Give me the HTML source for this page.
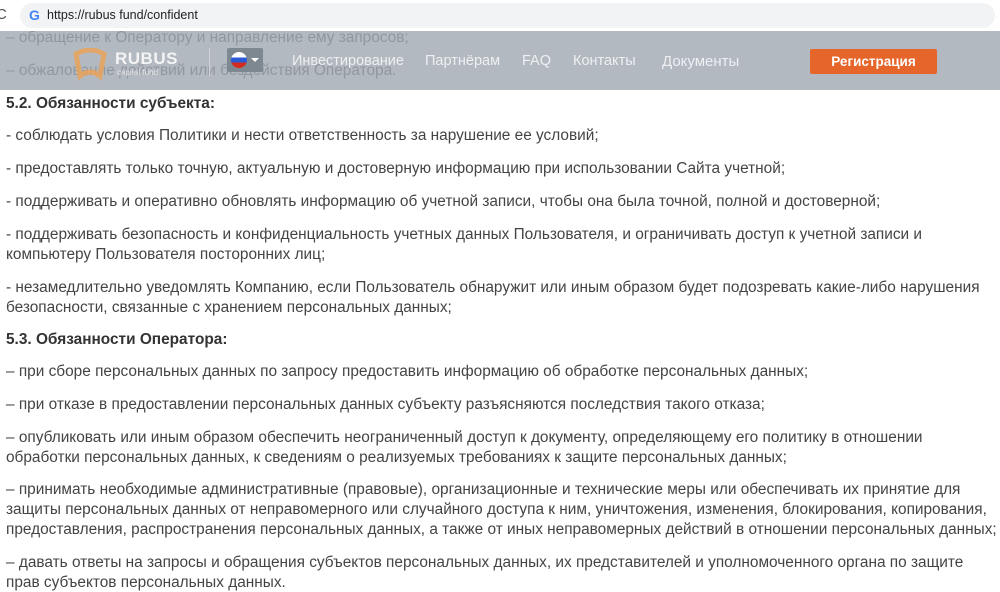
<!DOCTYPE html>
<html><head><meta charset="utf-8"><style>
body{margin:0;width:1000px;height:587px;overflow:hidden;background:#fff;font-family:"Liberation Sans",Arial,sans-serif;position:relative;color:#444}
.l{position:absolute;left:6px;font-size:15.4px;white-space:nowrap;line-height:18px;margin-top:2px}
.h{font-weight:bold;color:#333}
#top{position:absolute;left:0;top:0;width:1000px;height:31px;background:#fff}
#pill{position:absolute;left:20px;top:3px;width:975px;height:25px;background:#f1f3f4;border-radius:13px}
#hdr{position:absolute;left:0;top:31px;width:1000px;height:59px;background:rgba(160,168,177,0.8)}
.n{position:absolute;top:53px;font-size:14.5px;color:#eef0f2}
</style></head><body>
<div class="l" style="top:27px;color:#555">– обращение к Оператору и направление ему запросов;</div>
<div class="l" style="top:60px;color:#555">– обжалование действий или бездействия Оператора.</div>
<div id="hdr"></div>
<svg style="position:absolute;left:72px;top:48px" width="36" height="34" viewBox="0 0 36 34"><path d="M4 6 Q18 -2 32 6 L28 28 Q18 20 8 28 Z" fill="none" stroke="#e9a25a" stroke-width="5" opacity=".85"/></svg>
<div style="position:absolute;left:115px;top:49px;font-size:17px;font-weight:bold;color:#f4f4f4;letter-spacing:.5px">RUBUS</div>
<div style="position:absolute;left:117px;top:68px;font-size:8px;color:#e8e8e8">capital fund</div>
<div style="position:absolute;left:209px;top:48px;width:1px;height:28px;background:#d0d4d8"></div>
<div style="position:absolute;left:227px;top:48px;width:36px;height:24px;background:#7e8890;border-radius:2px"></div>
<div style="position:absolute;left:231px;top:52px;width:16px;height:16px;border-radius:50%;background:linear-gradient(#fff 0 33%,#2a5bd7 33% 66%,#d52b1e 66%)"></div>
<div style="position:absolute;left:251px;top:58px;border:4px solid transparent;border-top:4px solid #fff"></div>
<div class="n" style="left:292px">Инвестирование</div>
<div class="n" style="left:425px">Партнёрам</div>
<div class="n" style="left:522px">FAQ</div>
<div class="n" style="left:573px">Контакты</div>
<div class="n" style="left:662px;font-size:15px">Документы</div>
<div style="position:absolute;left:810px;top:49px;width:127px;height:25px;background:#e5652a;border-radius:2px;color:#fff;font-size:13.5px;font-weight:bold;text-align:center;line-height:25px">Регистрация</div>
<div id="top"><div id="pill"></div>
<div style="position:absolute;left:-4px;top:6px;font-size:15px;color:#555">C</div>
<div style="position:absolute;left:29px;top:7px;font-size:14px;font-weight:bold;color:#4285f4">G</div>
<div style="position:absolute;left:47px;top:8px;font-size:12.5px;color:#222">https://rubus fund/confident</div></div>
<div class="l h" style="top:93px">5.2. Обязанности субъекта:</div>
<div class="l" style="top:125px">- соблюдать условия Политики и нести ответственность за нарушение ее условий;</div>
<div class="l" style="top:158px">- предоставлять только точную, актуальную и достоверную информацию при использовании Сайта учетной;</div>
<div class="l" style="top:191px">- поддерживать и оперативно обновлять информацию об учетной записи, чтобы она была точной, полной и достоверной;</div>
<div class="l" style="top:224px">- поддерживать безопасность и конфиденциальность учетных данных Пользователя, и ограничивать доступ к учетной записи и</div>
<div class="l" style="top:244px">компьютеру Пользователя посторонних лиц;</div>
<div class="l" style="top:277px">- незамедлительно уведомлять Компанию, если Пользователь обнаружит или иным образом будет подозревать какие-либо нарушения</div>
<div class="l" style="top:297px">безопасности, связанные с хранением персональных данных;</div>
<div class="l h" style="top:329px">5.3. Обязанности Оператора:</div>
<div class="l" style="top:361px">– при сборе персональных данных по запросу предоставить информацию об обработке персональных данных;</div>
<div class="l" style="top:394px">– при отказе в предоставлении персональных данных субъекту разъясняются последствия такого отказа;</div>
<div class="l" style="top:427px">– опубликовать или иным образом обеспечить неограниченный доступ к документу, определяющему его политику в отношении</div>
<div class="l" style="top:447px">обработки персональных данных, к сведениям о реализуемых требованиях к защите персональных данных;</div>
<div class="l" style="top:479px">– принимать необходимые административные (правовые), организационные и технические меры или обеспечивать их принятие для</div>
<div class="l" style="top:499px">защиты персональных данных от неправомерного или случайного доступа к ним, уничтожения, изменения, блокирования, копирования,</div>
<div class="l" style="top:519px">предоставления, распространения персональных данных, а также от иных неправомерных действий в отношении персональных данных;</div>
<div class="l" style="top:552px">– давать ответы на запросы и обращения субъектов персональных данных, их представителей и уполномоченного органа по защите</div>
<div class="l" style="top:572px">прав субъектов персональных данных.</div>
</body></html>
